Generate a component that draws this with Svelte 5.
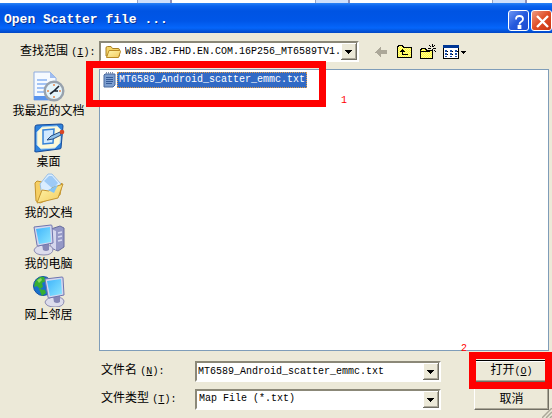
<script lang="ts">
interface Place {
  id: string;
  label: string;
}

const places: Place[] = [
  { id: 'recent', label: '我最近的文档' },
  { id: 'desktop', label: '桌面' },
  { id: 'documents', label: '我的文档' },
  { id: 'computer', label: '我的电脑' },
  { id: 'network', label: '网上邻居' },
];

const files = ['MT6589_Android_scatter_emmc.txt'];
let selected = $state(files[0]);
let fileName = $state(files[0]);

function pick(name: string) {
  selected = name;
  fileName = name;
}
</script>

{#snippet monitor()}
  <path d="M1 26q2-5 10-5t9 4q0 6-9 6t-10-5z" fill="#dcdcec" stroke="#8c8cb2" />
  <path d="M9 20l7-1v7q-3 2-6 0z" fill="#8587b6" />
  <path d="M1 3l17-2q1 0 1 1l1 17-15 3q-1 0-1-1z" fill="#d4d6ee" stroke="#6f75ae" />
  <path d="M3 5l14-2 1 15-12 2z" fill="url(#screen)" />
{/snippet}

{#snippet arrow()}
  <svg viewBox="0 0 16 17" width="16" height="17" shape-rendering="crispEdges" aria-hidden="true">
    <path d="M0 0h16v17H0z" fill="#716f64" />
    <path d="M0 0h15v16H0z" fill="#fff" />
    <path d="M1 1h14v15H1z" fill="#aca899" />
    <path d="M1 1h13v14H1z" fill="#ece9d8" />
    <path d="M4 7h7v1H4zM5 8h5v1H5zM6 9h3v1H6zM7 10h1v1H7z" fill="#000" />
  </svg>
{/snippet}

<svg class="defs" width="0" height="0" aria-hidden="true">
  <defs>
    <linearGradient id="screen" x2="1" y2="1">
      <stop offset="0" stop-color="#3fb4fb" />
      <stop offset="1" stop-color="#8ce6ff" />
    </linearGradient>
    <linearGradient id="folder" x2="1" y2="1">
      <stop offset="0" stop-color="#fff7b0" />
      <stop offset="1" stop-color="#f3cb5c" />
    </linearGradient>
    <pattern id="dither" width="2" height="2" patternUnits="userSpaceOnUse">
      <path d="M0 0h2v2H0z" fill="#ffff34" />
      <path d="M0 0h1v1H0zM1 1h1v1H1z" fill="#fff79c" />
    </pattern>
  </defs>
</svg>

<div class="behind"><i></i><i></i><i></i></div>

<div class="dialog" role="dialog" aria-labelledby="title">
  <header>
    <h1 id="title">Open Scatter file ...</h1>
    <button class="caption" aria-label="帮助">
      <svg viewBox="0 0 21 21" width="21" height="21">
        <path d="M7 8.5Q7 5 10.500 5T14 8q0 1.800-1.800 2.800T10.500 13.500M9.500 15h2v2h-2z" fill="none" stroke="#fff" stroke-width="1.8" />
      </svg>
    </button>
    <button class="caption close" aria-label="关闭">
      <svg viewBox="0 0 21 21" width="21" height="21">
        <path d="M5 5l11 11M16 5L5 16" stroke="#fff" stroke-width="2.4" />
      </svg>
    </button>
  </header>

  <div class="lookin">
    <label for="lookin">查找范围 <span class="mono">(<u>I</u>):</span></label>
    <div class="combo folder-combo">
      <svg viewBox="0 0 16 16" width="16" height="16" aria-hidden="true">
        <path d="M1 12V4q0-1.500 1.500-1.500H6l1.500 2H13q1.500 0 1.500 1.500v6z" fill="#f5d467" stroke="#a98023" />
        <path d="M1.500 13.500L4 6.500h10.500q1.200 0 1 1L13.500 13.500z" fill="url(#folder)" stroke="#b98a25" />
      </svg>
      <select id="lookin">
        <option>W8s.JB2.FHD.EN.COM.16P256_MT6589TV1.</option>
      </select>
      <span class="drop">{@render arrow()}</span>
    </div>
    <div class="tools">
      <button aria-label="后退" disabled>
        <svg viewBox="0 0 16 16" width="16" height="16" shape-rendering="crispEdges">
          <path d="M1 8h1V7h1V6h1V5h1V4h1V3h1v3h6v4H7v3H6v-1H5v-1H4v-1H3V9H1z" fill="#aca899" />
        </svg>
      </button>
      <button aria-label="向上一级">
        <svg viewBox="0 0 16 16" width="16" height="16" shape-rendering="crispEdges">
          <path d="M.5 13.5v-10l1-2h4l1 2h8v10z" fill="url(#dither)" stroke="#000" />
          <path d="M5 5h1v1h1v1h1v1H6v2h5v1H5V8H3V7h1V6h1z" fill="#000" />
        </svg>
      </button>
      <button aria-label="新建文件夹">
        <svg viewBox="0 0 16 16" width="16" height="16" shape-rendering="crispEdges">
          <path d="M.5 14.5v-8l1-2h4l1 2h6v8z" fill="url(#dither)" stroke="#000" />
          <path d="M1 7h9v1H1zM12 0h1v3h-1zM12 5h1v3h-1zM8 4h3v1H8zM13 4h3v1h-3zM9 1h1v1H9zM10 2h1v1h-1zM15 1h-1v1h1zM14 2h-1v1h1zM10 6h1v1h-1zM14 6h1v1h-1zM15 7h1v1h-1z" fill="#000" />
        </svg>
      </button>
      <button class="view" aria-label="查看">
        <svg viewBox="0 0 25 16" width="25" height="16" shape-rendering="crispEdges">
          <path d="M.5 1.5h15v13H.5z" fill="#fff" stroke="#000" />
          <path d="M0 1h16v3H0z" fill="#003795" />
          <path d="M2 6h2v2H2zM7 6h2v2H7zM12 6h2v2h-2zM2 9h2v2H2zM7 9h2v2H7zM12 9h2v2h-2zM2 12h2v1H2zM7 12h2v1H7zM12 12h2v1h-2z" fill="#1c4ea5" />
          <path d="M4 7h1v1H4zM9 7h1v1H9zM14 7h1v1h-1zM4 10h1v1H4zM9 10h1v1H9zM18 7h5v1h-5zM19 8h3v1h-3zM20 9h1v1h-1z" fill="#000" />
        </svg>
      </button>
    </div>
  </div>

  <div class="content">
    <nav>
      {#each places as place (place.id)}
        <button class="place">
          <svg viewBox="0 0 32 32" width="32" height="32" aria-hidden="true">
            {#if place.id === 'recent'}
              <path d="M1 1h16l6 6v22H1z" fill="#f5faff" stroke="#8facdf" />
              <path d="M17 1v6h6z" fill="#9fbdf0" />
              <path d="M4 9h10M4 13h12M4 17h8M4 21h7" stroke="#a3c4f5" stroke-width="2" />
              <path d="M1 25h12l3 4H1z" fill="#5793ed" />
              <circle cx="21" cy="20" r="9.3" fill="#e4f5fb" stroke="#98a2ad" stroke-width="2.4" />
              <path d="M21 13v2M21 25v2M14 20h2M26 20h2" stroke="#e6874d" stroke-width="1.5" />
              <path d="M17 23l4-3 5-5M21 20h4" fill="none" stroke="#1d2430" stroke-width="1.6" />
            {:else if place.id === 'desktop'}
              <path d="M4 3l24-1q2 0 2 2l-2 22q0 1-2 1L3 30q-2 0-1-2L2 5q0-2 2-2z" fill="#2f83dd" stroke="#164b9a" />
              <path d="M9 5l15-1 4 4-1 13-5 5-14 1-4-4V10z" fill="#fdf9d8" stroke="#b4d7ee" />
              <path d="M10 8l11-1-1 14-10 1z" fill="#d1eaff" stroke="#3683d7" stroke-width="1.5" />
              <path d="M14 18l4-4 9-4 1 3-8 4z" fill="#8fc3ec" stroke="#294b7b" />
              <circle cx="29" cy="10" r="2.3" fill="#d84524" />
            {:else if place.id === 'documents'}
              <path d="M2 10l2-2 5 1 2 4h15l3-3-2 12L7 30l-4-2z" fill="#f6cf64" stroke="#c3932c" />
              <path d="M7 11L15 1h4l9 10-6 11H9z" fill="#d9edff" stroke="#9bc0e6" />
              <path d="M11 8l5-5h3l6 7-5 6z" fill="#9dcaf6" />
              <path d="M4 30l5-13 7 1 3-3 11-4-5 14z" fill="url(#folder)" stroke="#c59631" />
              <path d="M15 17l10-5-4 8z" fill="#86c4f3" />
            {:else if place.id === 'computer'}
              <path d="M18 5l9-3 4 2v19l-6 4-7-3z" fill="#9498c6" stroke="#686d9e" />
              <path d="M18 5l5 2v19l-5-3z" fill="#d5d7ed" />
              <path d="M25 9l4-1M25 13l4-1M25 17l4-1" stroke="#d7d9f1" stroke-width="1.5" />
              {@render monitor()}
            {:else}
              <circle cx="10" cy="11" r="9.5" fill="#1870cc" stroke="#1551a4" />
              <path d="M2 7q4-6 9-5l2 4-4 2 1 4-3 2-3-3-3 1zM6 14l6 1 1 3-4 3z" fill="#38ae32" />
              <path d="M4 5l4-2 1 2-3 3z" fill="#8adb5d" />
              <g transform="translate(11 1)">{@render monitor()}</g>
            {/if}
          </svg>
          <span>{place.label}</span>
        </button>
      {/each}
    </nav>

    <div class="list">
      {#each files as file (file)}
        <button class="file" class:selected={file === selected} onclick={() => pick(file)}>
          <svg viewBox="0 0 16 16" width="16" height="16" aria-hidden="true">
            <path d="M4 2h10v11l-2 2H3V3z" fill="#7d9fd0" stroke="#49689d" />
            <path d="M5 5.500h7M5 7.500h7M5 9.500h7M5 11.500h6" stroke="#365b98" />
            <path d="M5.500 0v2M7.500 0v2M9.500 0v2M11.500 0v2" stroke="#7f8fae" />
          </svg>
          <span>{file}</span>
        </button>
      {/each}
      <div class="mark first"></div>
      <span class="step one">1</span>
    </div>
  </div>

  <div class="fields">
    <label for="filename">文件名 <span class="mono">(<u>N</u>):</span></label>
    <div class="combo">
      <input id="filename" type="text" bind:value={fileName} />
      <span class="drop">{@render arrow()}</span>
    </div>
    <div class="action">
      <button class="push default">打开<span class="mono">(<u>O</u>)</span></button>
      <div class="mark second"></div>
      <span class="step two">2</span>
    </div>

    <label for="filetype">文件类型 <span class="mono">(<u>T</u>):</span></label>
    <div class="combo">
      <select id="filetype">
        <option>Map File (*.txt)</option>
      </select>
      <span class="drop">{@render arrow()}</span>
    </div>
    <button class="push">取消</button>
  </div>

  <svg class="grip" viewBox="0 0 10 10" width="10" height="10" aria-hidden="true">
    <path d="M0 10L10 0M4 10l6-6M8 10l2-2" stroke="#aca899" stroke-width="1.5" />
  </svg>
</div>

<style>
  :global(body) {
    margin: 0;
    background: #ece9d8;
  }
  :global(#app) {
    display: flex;
    flex-direction: column;
    min-height: 100vh;
  }
  * {
    box-sizing: border-box;
  }
  .defs {
    position: absolute;
  }
  .behind {
    display: flex;
    justify-content: space-between;
    height: 3px;
    padding: 0 25px 0 137px;
    background: #fff;
  }
  .behind i {
    width: 35px;
    background: #cfe0fb;
    border-right: 2px solid #8f90b8;
    border-left: 1px solid #9aa5c4;
  }
  .dialog {
    position: relative;
    flex: 1;
    display: flex;
    flex-direction: column;
    background: #ece9d8;
    color: #000;
    font: 12px/14px 'Liberation Sans', 'Noto Sans CJK SC', sans-serif;
  }
  button,
  input,
  select {
    margin: 0;
    padding: 0;
    border: 0;
    border-radius: 0;
    background: none;
    color: inherit;
    font: inherit;
  }
  svg {
    display: block;
    flex-shrink: 0;
  }
  .mono,
  .file,
  .combo,
  .step {
    font-family: 'Liberation Mono', monospace;
    font-size: 10px;
  }
  u {
    text-underline-offset: 1px;
  }
  header {
    display: flex;
    align-items: center;
    gap: 2px;
    height: 30px;
    padding: 4px 0 0 4px;
    background: linear-gradient(#2a83f5 0, #0a63ee 3px, #0054e3 8px, #0056e8 18px, #0566fb 25px, #0247c4 30px);
  }
  h1 {
    flex: 1;
    margin: 0;
    color: #fff;
    font: bold 13px/16px 'Liberation Mono', monospace;
    text-shadow: 1px 1px #0a2f8c;
  }
  .caption {
    width: 21px;
    height: 21px;
    border: 1px solid #fff;
    border-radius: 3px;
    background: linear-gradient(135deg, #6d95f3, #2458dc 50%, #1c4cd0);
    display: grid;
    place-items: center;
  }
  .close {
    background: linear-gradient(135deg, #ee9b83, #df4d26 50%, #c93310);
  }
  .lookin {
    display: flex;
    align-items: center;
    padding: 8px 3px 7px 20px;
  }
  .lookin label {
    width: 79px;
  }
  .combo {
    position: relative;
    display: flex;
    align-items: center;
    height: 21px;
    border: 2px solid;
    border-color: #8b8878 #fff #fff #8b8878;
    background: #fff;
  }
  .folder-combo {
    width: 260px;
    padding-left: 4px;
    gap: 4px;
  }
  .combo select,
  .combo input {
    flex: 1;
    min-width: 0;
    height: 17px;
    appearance: none;
    outline: none;
  }
  .combo input {
    padding: 0 16px 0 1px;
  }
  .combo select {
    padding: 0 16px 0 0;
  }
  .fields select {
    padding-left: 2px;
  }
  .drop {
    position: absolute;
    top: 0;
    right: 0;
    pointer-events: none;
  }
  .tools {
    display: flex;
    gap: 7px;
    padding-left: 15px;
  }
  .content {
    flex: 1;
    display: flex;
  }
  nav {
    display: flex;
    flex-direction: column;
    gap: 4px;
    width: 99px;
    padding-top: 2px;
  }
  .place {
    display: flex;
    flex-direction: column;
    align-items: center;
    gap: 1px;
    width: 97px;
    line-height: 14px;
  }
  .list {
    position: relative;
    flex: 1;
    margin-right: 3px;
    padding: 2px 1px;
    border: 1px solid #7f9db9;
    background: #fff;
  }
  .file {
    display: flex;
    align-items: center;
  }
  .file span {
    padding: 0 1px;
    border: 1px solid transparent;
    line-height: 14px;
  }
  .selected span {
    border: 1px dotted #e09a44;
    background: #316ac5;
    color: #fff;
  }
  .fields {
    display: grid;
    grid-template-columns: 94px 1fr 75px;
    grid-auto-rows: 22px;
    row-gap: 6px;
    align-items: center;
    padding: 9px 3px 8px 101px;
  }
  .fields .combo {
    margin-right: 33px;
  }
  .push {
    width: 100%;
    height: 22px;
    border: 1px solid;
    border-color: #fff #716f64 #716f64 #fff;
    box-shadow: inset -1px -1px #aca899;
    line-height: 14px;
  }
  .default {
    border-color: #000 #716f64 #716f64 #000;
    box-shadow: inset 1px 1px #fff, inset -1px -1px #aca899;
  }
  .action {
    position: relative;
  }
  .mark {
    position: absolute;
    border: 7px solid #f00;
    pointer-events: none;
  }
  .first {
    top: -9px;
    left: -14px;
    width: 240px;
    height: 46px;
  }
  .second {
    inset: -8px -3px -7px -5px;
  }
  .step {
    position: absolute;
    color: #f00;
  }
  .one {
    top: 24px;
    left: 241px;
  }
  .two {
    top: -18px;
    left: -13px;
  }
  .grip {
    position: absolute;
    right: 0;
    bottom: 0;
  }
</style>
